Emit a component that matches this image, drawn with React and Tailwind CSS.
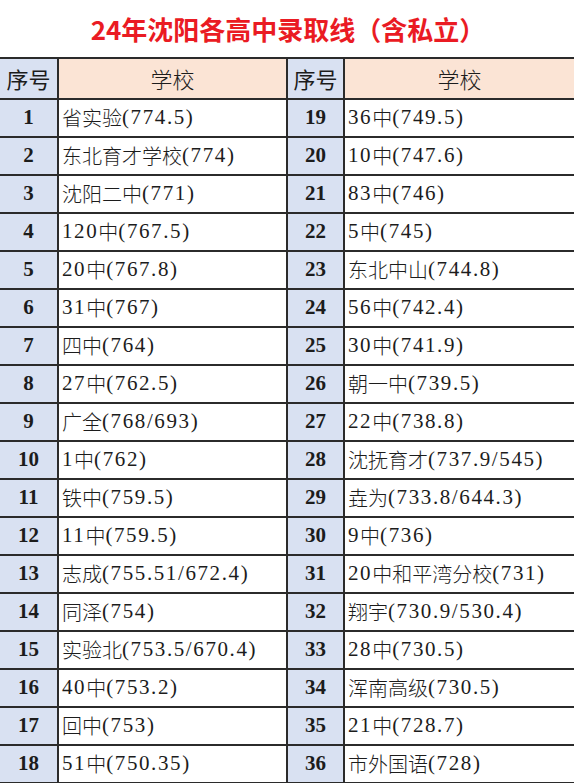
import React from "react";

const rows = [
  ["1", "省实验(774.5)", "19", "36中(749.5)"],
  ["2", "东北育才学校(774)", "20", "10中(747.6)"],
  ["3", "沈阳二中(771)", "21", "83中(746)"],
  ["4", "120中(767.5)", "22", "5中(745)"],
  ["5", "20中(767.8)", "23", "东北中山(744.8)"],
  ["6", "31中(767)", "24", "56中(742.4)"],
  ["7", "四中(764)", "25", "30中(741.9)"],
  ["8", "27中(762.5)", "26", "朝一中(739.5)"],
  ["9", "广全(768/693)", "27", "22中(738.8)"],
  ["10", "1中(762)", "28", "沈抚育才(737.9/545)"],
  ["11", "铁中(759.5)", "29", "垚为(733.8/644.3)"],
  ["12", "11中(759.5)", "30", "9中(736)"],
  ["13", "志成(755.51/672.4)", "31", "20中和平湾分校(731)"],
  ["14", "同泽(754)", "32", "翔宇(730.9/530.4)"],
  ["15", "实验北(753.5/670.4)", "33", "28中(730.5)"],
  ["16", "40中(753.2)", "34", "浑南高级(730.5)"],
  ["17", "回中(753)", "35", "21中(728.7)"],
  ["18", "51中(750.35)", "36", "市外国语(728)"],
];

// ascii parts look like SimSun half-width, so give them a serif + spacing
const SchoolText = ({ text }) => {
  const parts = text.split(/([\x00-\x7f]+)/).filter(Boolean);
  return (
    <>
      {parts.map((p, i) =>
        /^[\x00-\x7f]+$/.test(p) ? (
          <span
            key={i}
            className="[font-family:'Liberation_Serif',serif] text-[21px] tracking-[1.6px]"
          >
            {p}
          </span>
        ) : (
          <span key={i} className="[font-family:'Noto_Sans_CJK_SC',sans-serif] font-light">
            {p}
          </span>
        )
      )}
    </>
  );
};

const border = "border-r-2 border-b-2 border-[#2b2b2b]";
const numCell =
  "h-[38px] bg-[#d9e1f2] flex items-center justify-center [font-family:'Liberation_Serif',serif] font-bold text-[21px] text-[#1c1c1c] " +
  border;
const headNum =
  "h-[41px] bg-[#d9e1f2] flex items-center justify-center [font-family:'Noto_Sans_CJK_SC',sans-serif] text-[22px] text-[#1c1c1c] " +
  border;
const headSchool =
  "h-[41px] bg-[#fbe4d5] flex items-center justify-center [font-family:'Noto_Sans_CJK_SC',sans-serif] font-light text-[22px] text-[#1c1c1c]";
const schoolCell =
  "h-[38px] bg-white flex items-center pl-[3px] text-[20px] text-[#1c1c1c] whitespace-nowrap overflow-hidden";

export default function App() {
  return (
    <div className="w-[574px] h-[783px] bg-white overflow-hidden">
      <div className="h-[57px] flex items-center justify-center pl-[2px]">
        <h1 className="[font-family:'Noto_Sans_CJK_SC',sans-serif] font-bold text-[26px] text-[#ea1b23]">
          24年沈阳各高中录取线（含私立）
        </h1>
      </div>

      <div className="grid grid-cols-[59px_229px_57px_229px] border-t-2 border-[#2b2b2b]">
        {/* header */}
        <div className={headNum}>序号</div>
        <div className={headSchool + " " + border}>学校</div>
        <div className={headNum}>序号</div>
        <div className={headSchool + " border-b-2 border-[#2b2b2b]"}>学校</div>

        {rows.map((r) => (
          <React.Fragment key={r[0]}>
            <div className={numCell}>{r[0]}</div>
            <div className={schoolCell + " " + border}>
              <SchoolText text={r[1]} />
            </div>
            <div className={numCell}>{r[2]}</div>
            <div className={schoolCell + " border-b-2 border-[#2b2b2b]"}>
              <SchoolText text={r[3]} />
            </div>
          </React.Fragment>
        ))}
      </div>
    </div>
  );
}
